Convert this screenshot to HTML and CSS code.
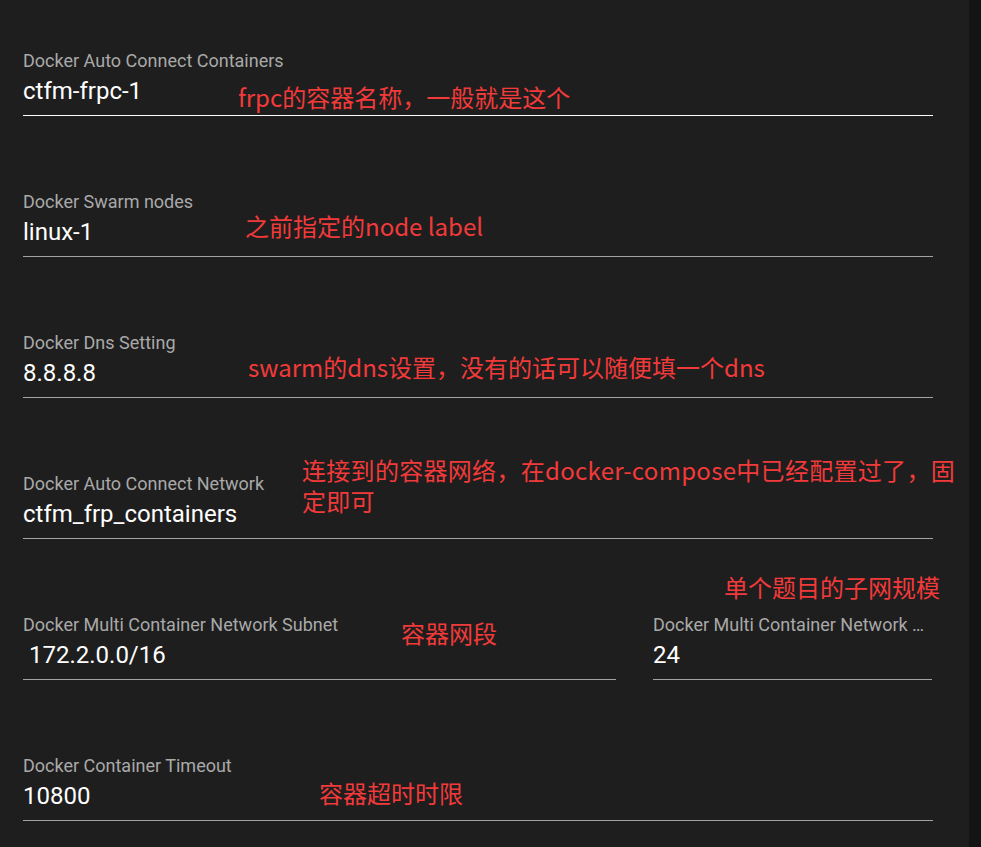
FILE: index.html
```html
<!DOCTYPE html>
<html lang="zh-CN">
<head>
<meta charset="utf-8">
<title>Docker settings</title>
<link rel="stylesheet" href="styles.css">
</head>
<body>
<div class="page">
  <main class="main">
    <div class="form">
      <div class="field field--active">
        <div class="label">Docker Auto Connect Containers</div>
        <div class="value">ctfm-frpc-1</div>
      </div>
      <div class="field">
        <div class="label">Docker Swarm nodes</div>
        <div class="value">linux-1</div>
      </div>
      <div class="field">
        <div class="label">Docker Dns Setting</div>
        <div class="value">8.8.8.8</div>
      </div>
      <div class="field">
        <div class="label">Docker Auto Connect Network</div>
        <div class="value">ctfm_frp_containers</div>
      </div>
      <div class="split">
        <div class="field field--wide">
          <div class="label">Docker Multi Container Network Subnet</div>
          <div class="value">&nbsp;172.2.0.0/16</div>
        </div>
        <div class="field field--narrow">
          <div class="label">Docker Multi Container Network …</div>
          <div class="value">24</div>
        </div>
      </div>
      <div class="field">
        <div class="label">Docker Container Timeout</div>
        <div class="value">10800</div>
      </div>
    </div>

    <div class="note note-1">frpc的容器名称，一般就是这个</div>
    <div class="note note-2">之前指定的node label</div>
    <div class="note note-3">swarm的dns设置，没有的话可以随便填一个dns</div>
    <div class="note note-4">连接到的容器网络，在docker-compose中已经配置过了，固<br>定即可</div>
    <div class="note note-5">单个题目的子网规模</div>
    <div class="note note-6">容器网段</div>
    <div class="note note-7">容器超时时限</div>
  </main>
  <div class="scrollbar"></div>
</div>
</body>
</html>
```
FILE: styles.css
```css
html, body {
  margin: 0;
  padding: 0;
  background: #1e1e1e;
}
.page {
  display: flex;
  width: 981px;
  height: 847px;
  overflow: hidden;
}
.main {
  position: relative;
  flex: 1;
  background: #1e1e1e;
}
.scrollbar {
  width: 12px;
  background: #141414;
}
.form {
  display: flex;
  flex-direction: column;
  gap: 76px;
  padding: 51px 0 0 23px;
  width: 910px;
}
.split {
  display: flex;
  gap: 37px;
}
.field {
  border-bottom: 1px solid #a3a3a3;
  padding-bottom: 10px;
  min-width: 0;
}
.field--active {
  border-bottom-color: #ffffff;
}
.field--wide {
  width: 593px;
}
.field--narrow {
  width: 279px;
}
.label {
  width: fit-content;
  font-family: Roboto, "Liberation Sans", sans-serif;
  font-size: 18px;
  line-height: 20px;
  color: #a9a9a9;
  white-space: nowrap;
}
.value {
  width: fit-content;
  margin-top: 6px;
  font-family: Roboto, "Liberation Sans", sans-serif;
  font-size: 24px;
  line-height: 28px;
  color: #ffffff;
  white-space: pre;
}
.note {
  position: absolute;
  font-family: "Microsoft YaHei", "Noto Sans CJK SC", sans-serif;
  font-size: 24px;
  line-height: 31px;
  color: #f23a3a;
  white-space: nowrap;
}
.note-1 { left: 238px; top: 81px; }
.note-2 { left: 245px; top: 210px; }
.note-3 { left: 248px; top: 351px; }
.note-4 { left: 302px; top: 454px; letter-spacing: 0.3px; }
.note-5 { left: 724px; top: 571px; }
.note-6 { left: 401px; top: 617px; }
.note-7 { left: 319px; top: 777px; }
```
